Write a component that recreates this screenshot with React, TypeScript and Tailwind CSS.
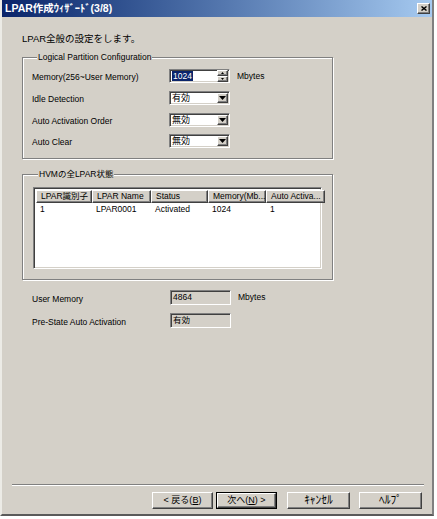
import React from "react";

const sunken =
  "border border-t-[#808080] border-l-[#808080] border-b-white border-r-white shadow-[inset_1px_1px_0_#404040,inset_-1px_-1px_0_#d4d0c8]";
const raised =
  "border border-t-white border-l-white border-r-[#404040] border-b-[#404040] shadow-[inset_-1px_-1px_0_#808080]";
const etched =
  "border border-[#808080] shadow-[inset_1px_1px_0_#fff,1px_1px_0_#fff]";

function DownArrow() {
  return (
    <svg width="7" height="4" viewBox="0 0 7 4">
      <path d="M0 0h7L3.5 4z" fill="#000" />
    </svg>
  );
}

function Combo({ value }: { value: string }) {
  return (
    <div className={`w-[61px] h-[14px] bg-white flex items-center ${sunken}`}>
      <span className="flex-1 pl-[2px] leading-none text-[9px]">{value}</span>
      <div className={`w-[11px] h-[10px] mr-[1px] bg-[#d4d0c8] flex items-center justify-center ${raised}`}>
        <DownArrow />
      </div>
    </div>
  );
}

function Spin({ value }: { value: string }) {
  return (
    <div className={`w-[61px] h-[14px] bg-white flex items-center ${sunken}`}>
      <span className="flex-1 pl-[2px] leading-none">
        <span className="bg-[#0a246a] text-white px-[1px]">{value}</span>
      </span>
      <div className="w-[11px] h-[12px] mr-[1px] flex flex-col">
        <div className={`flex-1 bg-[#d4d0c8] flex items-center justify-center ${raised}`}>
          <svg width="3" height="2" viewBox="0 0 3 2">
            <path d="M0 2h3L1.5 0z" fill="#000" />
          </svg>
        </div>
        <div className={`flex-1 bg-[#d4d0c8] flex items-center justify-center ${raised}`}>
          <svg width="3" height="2" viewBox="0 0 3 2">
            <path d="M0 0h3L1.5 2z" fill="#000" />
          </svg>
        </div>
      </div>
    </div>
  );
}

function Field({ value }: { value: string }) {
  return (
    <div className={`w-[61px] h-[15px] bg-[#d4d0c8] flex items-center pl-[2px] ${sunken}`}>
      {value}
    </div>
  );
}

const columns = [
  { title: "LPAR識別子", w: "w-[56px]" },
  { title: "LPAR Name", w: "w-[59px]" },
  { title: "Status", w: "w-[57px]" },
  { title: "Memory(Mb...", w: "w-[58px]" },
  { title: "Auto Activa...", w: "w-[59px]" },
];
const rows = [["1", "LPAR0001", "Activated", "1024", "1"]];

function Button({ children, def }: { children: React.ReactNode; def?: boolean }) {
  return (
    <div className={`h-[17px] ${def ? "border border-black" : ""}`}>
      <div className={`h-full bg-[#d4d0c8] flex items-center justify-center ${raised}`}>{children}</div>
    </div>
  );
}

export default function App() {
  return (
    <div className="w-[437px] h-[519px] bg-white text-black text-[8.5px] font-['Liberation_Sans','Noto_Sans_CJK_JP',sans-serif]">
      <div className="w-[434px] h-[516px] bg-[#d4d0c8] border-l-2 border-l-[#ecebe6] border-r-2 border-r-[#808080] border-b-2 border-b-[#5a5a5a] flex flex-col">
        <div className="h-[17px] flex items-center justify-between pl-[3px] pr-[2px] bg-linear-to-r from-[#0a246a] to-[#a6caf0]">
          <span className="text-white font-bold text-[10.5px]">LPAR作成ｳｨｻﾞｰﾄﾞ(3/8)</span>
          <div className={`w-[13px] h-[11px] bg-[#d4d0c8] flex items-center justify-center ${raised}`}>
            <svg width="6" height="5" viewBox="0 0 6 5">
              <path d="M0.5 0.5L5.5 4.5M5.5 0.5L0.5 4.5" stroke="#000" strokeWidth="1.4" />
            </svg>
          </div>
        </div>

        <div className="flex-1 flex flex-col pl-[20px]">
          <p className="mt-[16px] leading-[12px] text-[9.5px]">LPAR全般の設定をします。</p>

          <fieldset className={`mt-[6px] w-[311px] pl-[9px] pb-[10px] ${etched}`}>
            <legend className="ml-[5px] px-[1px] leading-[12px] bg-[#d4d0c8]">Logical Partition Configuration</legend>
            <div className="flex items-center h-[14px] mt-[6px]">
              <span className="w-[137px] pt-[2px]">Memory(256~User Memory)</span>
              <Spin value="1024" />
              <span className="ml-[7px]">Mbytes</span>
            </div>
            <div className="flex items-center h-[14px] mt-[8px]">
              <span className="w-[137px] pt-[3px]">Idle Detection</span>
              <Combo value="有効" />
            </div>
            <div className="flex items-center h-[14px] mt-[8px]">
              <span className="w-[137px] pt-[3px]">Auto Activation Order</span>
              <Combo value="無効" />
            </div>
            <div className="flex items-center h-[14px] mt-[7px]">
              <span className="w-[137px] pt-[3px]">Auto Clear</span>
              <Combo value="無効" />
            </div>
          </fieldset>

          <fieldset className={`mt-[9px] w-[311px] pl-[10px] pb-[10px] ${etched}`}>
            <legend className="ml-[5px] px-[1px] leading-[12px] bg-[#d4d0c8]">HVMの全LPAR状態</legend>
            <div className={`mt-[7px] w-[289px] h-[82px] bg-white flex flex-col p-[2px] ${sunken}`}>
              <div className="flex h-[13px]">
                {columns.map((c) => (
                  <div
                    key={c.title}
                    className={`${c.w} shrink-0 bg-[#d4d0c8] pl-[4px] flex items-center whitespace-nowrap overflow-hidden ${raised}`}
                  >
                    {c.title}
                  </div>
                ))}
              </div>
              {rows.map((r, i) => (
                <div key={i} className="flex h-[12px] items-center">
                  {r.map((cell, j) => (
                    <div key={j} className={`${columns[j].w} shrink-0 pl-[4px]`}>
                      {cell}
                    </div>
                  ))}
                </div>
              ))}
            </div>
          </fieldset>

          <div className="flex items-center h-[15px] mt-[10px] pl-[10px]">
            <span className="w-[138px] pt-[3px]">User Memory</span>
            <Field value="4864" />
            <span className="ml-[7px]">Mbytes</span>
          </div>
          <div className="flex items-center h-[15px] mt-[8px] pl-[10px]">
            <span className="w-[138px] pt-[3px]">Pre-State Auto Activation</span>
            <Field value="有効" />
          </div>
        </div>

        <div className="ml-[10px] mr-[8px] border-t border-t-[#808080] border-b border-b-white" />
        <div className="flex justify-end pr-[10px] mt-[6px] mb-[5px] text-[9px]">
          <div className="w-[61px]">
            <Button>
              &lt; 戻る(<span className="underline">B</span>)
            </Button>
          </div>
          <div className="w-[61px] ml-[3px]">
            <Button def>
              次へ(<span className="underline">N</span>) &gt;
            </Button>
          </div>
          <div className="w-[63px] ml-[10px]">
            <Button>
              <span className="text-[11.5px]">ｷｬﾝｾﾙ</span>
            </Button>
          </div>
          <div className="w-[63px] ml-[9px]">
            <Button>
              <span className="text-[11.5px]">ﾍﾙﾌﾟ</span>
            </Button>
          </div>
        </div>
      </div>
    </div>
  );
}
